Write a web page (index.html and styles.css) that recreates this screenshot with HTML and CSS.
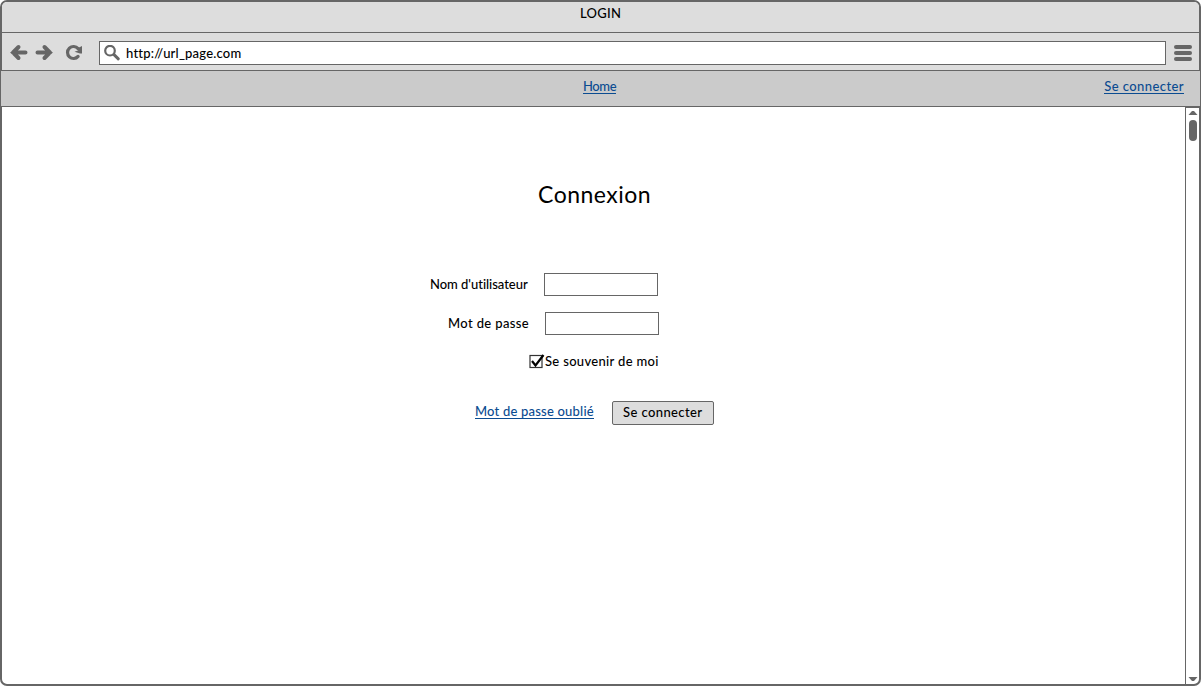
FILE: index.html
```html
<!DOCTYPE html>
<html lang="fr">
<head>
<meta charset="utf-8">
<title>LOGIN</title>
<link rel="stylesheet" href="styles.css">
</head>
<body>
<div class="window">
  <header class="titlebar"><span class="t-title">LOGIN</span></header>
  <div class="toolbar">
    <svg class="nav-icons" width="88" height="37" viewBox="0 0 88 37">
      <g fill="none" stroke="#666" stroke-width="4">
        <path d="M13 19.500H25.500M18.500 14L13 19.500L18.500 25" stroke-linecap="round"/>
        <path d="M37.500 19.500H50M44.500 14L50 19.500L44.500 25" stroke-linecap="round"/>
        <path d="M78.100 15.600A6 6 0 1 0 78.100 23.400" stroke-width="3.200" stroke-linecap="round"/>
      </g>
      <path d="M82 13V20.500H80L74.500 18.800L78 17.500L79 14.500Z" fill="#666"/>
    </svg>
    <div class="address">
      <svg width="18" height="18" viewBox="0 0 18 18">
        <circle cx="6" cy="5.700" r="4.800" fill="none" stroke="#666" stroke-width="2.200"/>
        <path d="M10 9.700L14.300 13.800" stroke="#666" stroke-width="3" stroke-linecap="round"/>
      </svg>
      <span class="t-url">http://url_page.com</span>
    </div>
    <div class="menu"><i></i><i></i><i></i></div>
  </div>
  <nav class="navband">
    <a class="link t-home">Home</a>
    <a class="link t-connect">Se connecter</a>
  </nav>
  <div class="content">
    <main class="page">
      <h1>Connexion</h1>
      <form>
        <div class="row user"><label class="t-user">Nom d'utilisateur</label><span class="field"></span></div>
        <div class="row pass"><label class="t-pass">Mot de passe</label><span class="field"></span></div>
        <div class="row remember">
          <svg width="16" height="16" viewBox="0 0 16 16">
            <rect x="1" y="2.500" width="12" height="12" fill="#fff" stroke="#333" stroke-width="1.200"/>
            <path d="M3 8L6.500 12.500L14.500 2" fill="none" stroke="#000" stroke-width="2.200"/>
          </svg>
          <span class="t-remember">Se souvenir de moi</span>
        </div>
        <div class="row actions">
          <a class="link t-forgot">Mot de passe oublié</a>
          <span class="button"><span class="t-button">Se connecter</span></span>
        </div>
      </form>
    </main>
    <div class="scrollbar">
      <svg width="10" height="5" viewBox="0 0 10 5"><path d="M0.500 5L4 1H6L9.500 5Z" fill="#666"/></svg>
      <div class="thumb"></div>
      <svg class="down" width="10" height="5" viewBox="0 0 10 5"><path d="M0.500 0L4 4H6L9.500 0Z" fill="#666"/></svg>
    </div>
  </div>
</div>
</body>
</html>
```
FILE: styles.css
```css
* { box-sizing: border-box; }
body { margin: 0; background: #fff; font: 500 13px/16px Lato, sans-serif; font-variant-ligatures: none; color: #000; }
.window { width: 1201px; height: 686px; border: 2px solid #666; border-radius: 7px; display: flex; flex-direction: column; background: #fff; }
.titlebar { height: 31px; flex: none; background: #ddd; border-bottom: 1px solid #666; border-radius: 5px 5px 0 0; padding: 3px 0 0 578px; }
.t-title { letter-spacing: .25px; }
.toolbar { height: 38px; flex: none; background: #ddd; border-bottom: 1px solid #666; display: flex; }
.nav-icons { flex: none; margin-left: -2px; }
.address { width: 1067px; height: 24px; margin: 8px 0 0 11px; border: 1px solid #666; background: #fff; display: flex; padding: 3px 0 0 4px; }
.t-url { margin-left: 4px; letter-spacing: .2px; }
.menu { width: 18px; margin: 12px 0 0 8px; display: flex; flex-direction: column; gap: 2px; }
.menu i { height: 4px; border-radius: 2px; background: #666; }
.navband { height: 36px; flex: none; margin: 0 -1px; background: #cbcbcb; border-bottom: 1px solid #666; display: flex; justify-content: space-between; padding: 7px 16px 0 582px; }
.link { color: #0b4c91; border-bottom: 1px solid #0b4c91; height: 16px; line-height: 16px; white-space: nowrap; }
.t-home { letter-spacing: -.4px; }
.t-connect { letter-spacing: .42px; }
.content { flex: 1; display: flex; }
.page { width: 1183px; padding-top: 71px; }
h1 { margin: -1px 0 0 536px; font: 400 23px/34px Lato, sans-serif; letter-spacing: .5px; }
.row { display: flex; }
.user { margin: 62px 0 0 428px; }
.pass { margin: 16px 0 0 446px; }
.user, .pass { height: 23px; align-items: center; }
.t-user, .t-pass { padding-bottom: 2px; white-space: nowrap; }
.t-user { width: 114px; letter-spacing: -.03px; }
.t-pass { width: 97px; letter-spacing: .37px; }
.field { width: 114px; height: 23px; border: 1px solid #666; }
.remember { margin: 18px 0 0 527px; height: 18px; }
.t-remember { letter-spacing: .32px; }
.actions { margin: 30px 0 0 473px; height: 24px; }
.t-forgot { width: 119px; margin: 2px 18px 0 0; letter-spacing: .2px; }
.button { width: 102px; height: 24px; border: 1px solid #666; border-radius: 2px; background: #ddd; padding: 2px 0 0 10px; }
.t-button { letter-spacing: .4px; }
.scrollbar { width: 14px; border-left: 1px solid #666; border-top: 1px solid #666; display: flex; flex-direction: column; align-items: center; padding: 2px 0 2px; }
.thumb { width: 8px; height: 21px; background: #666; border-radius: 4px; margin-top: 5px; }
.down { margin-top: auto; }
```
